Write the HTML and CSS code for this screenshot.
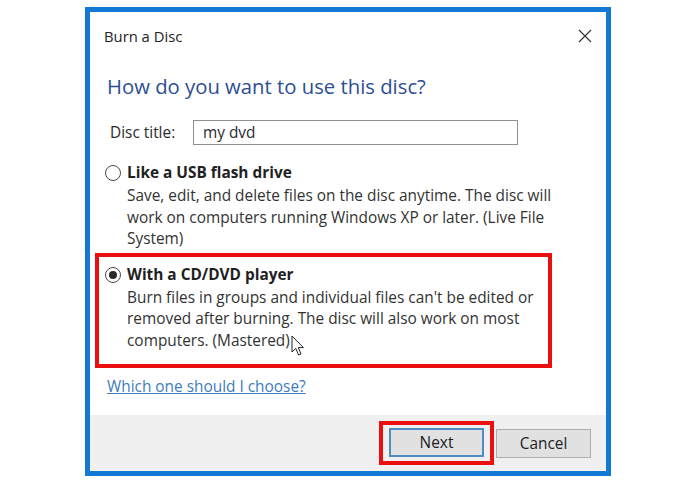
FILE: index.html
```html
<!DOCTYPE html>
<html>
<head>
	<meta charset="utf-8">
	<meta name="viewport" content="width=device-width, initial-scale=1">
	<title>Burn a Disc</title>

	<link rel="stylesheet" href="styles.css">

</head>
<body>
	<div class="dialog">
		<div class="titlebar">
			<span class="title">Burn a Disc</span>
			<svg class="close" width="14" height="14" viewBox="0 0 14 14">
				<path d="M1 1 L13 13 M13 1 L1 13" stroke="#3a3a3a" stroke-width="1.3" fill="none"/>
			</svg>
		</div>

		<div class="content">
			<h1 class="instruction">How do you want to use this disc?</h1>

			<div class="field">
				<span class="label">Disc title:</span>
				<div class="input">my dvd</div>
			</div>

			<div class="option">
				<span class="radio"></span>
				<div class="option-text">
					<div class="option-name">Like a USB flash drive</div>
					<p>Save, edit, and delete files on the disc anytime. The disc will work on computers running Windows XP or later. (Live File System)</p>
				</div>
			</div>

			<div class="option marked">
				<span class="radio checked"></span>
				<div class="option-text">
					<div class="option-name">With a CD/DVD player</div>
					<p>Burn files in groups and individual files can't be edited or removed after burning. The disc will also work on most computers. (Mastered)</p>
				</div>
				<!-- mouse pointer from the recording -->
				<svg class="pointer" width="14" height="22" viewBox="0 0 14 22">
					<path d="M1 1 L1 17 L4.8 13.4 L7.6 20 L10 19 L7.3 12.6 L12.4 12.6 Z" fill="#fff" stroke="#222" stroke-width="1"/>
				</svg>
			</div>

			<a class="help" href="#">Which one should I choose?</a>
		</div>

		<div class="footer">
			<div class="marked-btn">
				<button class="btn btn-default">Next</button>
			</div>
			<button class="btn">Cancel</button>
		</div>
	</div>
</body>
</html>
```

FILE: styles.css
```css
body {
	margin: 0;
	background: #fff;
	font-family: "Open Sans", "Noto Sans", sans-serif;
	color: #2b2b2b;
}

.dialog {
	margin: 7px 0 0 85px;
	width: 516px;
	height: 459px;
	border: 5px solid #1479d4;
	display: flex;
	flex-direction: column;
	background: #fff;
}

.titlebar {
	height: 48px;
	display: flex;
	align-items: center;
	justify-content: space-between;
	padding: 0 14px 0 14px;
}
.title {
	font-size: 14.8px;
	color: #222;
}
.close {
	display: block;
	margin-top: -1px;
}

.content {
	flex: 1;
	padding: 0 0 0 17px;
}

.instruction {
	margin: 13px 0 0 0;
	font-size: 20.3px;
	line-height: 26px;
	font-weight: normal;
	color: #2c4e92;
}

.field {
	display: flex;
	align-items: center;
	margin-top: 21px;
	padding-left: 3px;
}
.label {
	font-size: 15.4px;
	width: 83px;
}
.input {
	width: 314px;
	height: 23px;
	border: 1px solid #8f8f8f;
	padding-left: 9px;
	font-size: 15.4px;
	line-height: 23px;
}

.option {
	display: flex;
	align-items: flex-start;
	margin-top: 17px;
	position: relative;
}
.option.marked {
	margin: 3px 0 0 -12px;
	width: 441px;
	border: 4px solid #ec0f0f;
	padding: 7px 0 13px 8px;
}

.radio {
	width: 14px;
	height: 14px;
	border: 1px solid #4a4a4a;
	border-radius: 50%;
	margin: 3px 6px 0 -2px;
	flex: none;
	position: relative;
	background: #fff;
}
.radio.checked::after {
	content: "";
	position: absolute;
	left: 3px;
	top: 3px;
	width: 8px;
	height: 8px;
	border-radius: 50%;
	background: #2a2a2a;
}

.option-name {
	font-size: 15.4px;
	font-weight: bold;
	line-height: 22px;
	color: #1f1f1f;
}
.option-text p {
	margin: 1px 0 0 0;
	font-size: 15.4px;
	line-height: 21.5px;
	width: 434px;
	color: #333;
}

.pointer {
	position: absolute;
	left: 192px;
	top: 78px;
}

.help {
	display: inline-block;
	margin-top: 8px;
	font-size: 15.4px;
	line-height: 22px;
	color: #3d7cc0;
}

.footer {
	height: 56px;
	background: #f0f0f0;
	display: flex;
	align-items: center;
	justify-content: flex-end;
	padding-right: 15px;
	gap: 2px;
}

.marked-btn {
	border: 4px solid #ec0f0f;
	padding: 3px 6px 4px 6px;
}

.btn {
	display: block;
	width: 95px;
	height: 29px;
	font-family: "Open Sans", "Noto Sans", sans-serif;
	font-size: 15.4px;
	color: #222;
	background: #e1e1e1;
	border: 1px solid #adadad;
	padding: 0;
}
.btn-default {
	border: 2px solid #4f8cc2;
}
```
